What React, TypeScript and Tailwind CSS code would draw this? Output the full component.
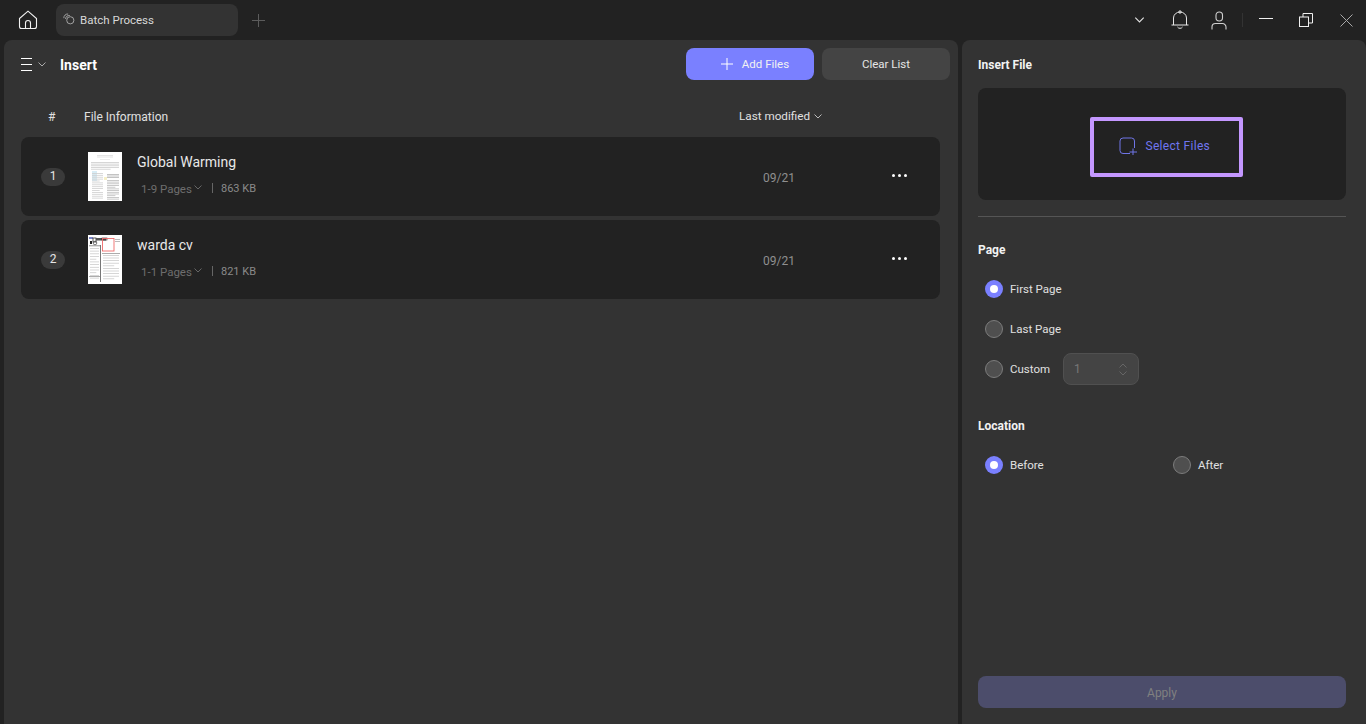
import React from "react";

const Chevron = ({ className = "", color = "#bdbdbd" }: { className?: string; color?: string }) => (
  <svg width="8" height="5" viewBox="0 0 8 5" fill="none" className={className}>
    <path d="M0.5 0.5 L4 4 L7.5 0.5" stroke={color} strokeWidth="1" />
  </svg>
);

const Lines = ({ n, x, y, w, gap, c = "#9a9a9a" }: { n: number; x: number; y: number; w: number; gap: number; c?: string }) => (
  <g>
    {Array.from({ length: n }).map((_, i) => (
      <rect key={i} x={x} y={y + i * gap} width={w - (i % 5 === 4 ? w * 0.3 : 0)} height="0.8" fill={c} />
    ))}
  </g>
);

const ThumbOne = () => (
  <svg width="34" height="49" viewBox="0 0 34 49" className="shrink-0">
    <rect width="34" height="49" fill="#fff" />
    <Lines n={2} x={9} y={3} w={16} gap={1.6} c="#ddd" />
    <Lines n={1} x={12} y={7} w={10} gap={1.5} c="#e6e6e6" />
    <Lines n={5} x={3} y={10} w={28} gap={1.7} c="#ccc" />
    <rect x="4" y="19" width="5" height="10" fill="#d8ecf5" />
    <rect x="16" y="25" width="3" height="3" fill="#f6f0c8" />
    <Lines n={14} x={4} y={21} w={11} gap={1.9} c="#cfcfcf" />
    <Lines n={3} x={19} y={22} w={12} gap={1.6} c="#b5b5b5" />
    <Lines n={12} x={19} y={28} w={12} gap={1.7} c="#bcbcbc" />
  </svg>
);

const ThumbTwo = () => (
  <svg width="34" height="49" viewBox="0 0 34 49" className="shrink-0">
    <rect width="34" height="49" fill="#fff" />
    <rect x="1" y="2" width="4" height="2" fill="#7d86c9" />
    <rect x="5" y="3" width="3" height="4" fill="none" stroke="#333" strokeWidth="0.8" />
    <rect x="8" y="3" width="10" height="2.5" fill="#555" />
    <rect x="14" y="3" width="5" height="2" fill="none" stroke="#222" strokeWidth="0.6" />
    <rect x="2" y="6" width="2" height="3" fill="#222" />
    <circle cx="7" cy="8" r="1.8" fill="none" stroke="#444" strokeWidth="0.7" />
    <rect x="14.5" y="3.5" width="11.5" height="12.5" fill="none" stroke="#ef6a6a" strokeWidth="0.9" />
    <Lines n={2} x={27} y={4} w={5} gap={2} c="#aaa" />
    <rect x="1" y="10.5" width="12" height="0.7" fill="#666" />
    <rect x="12" y="10" width="1" height="37" fill="#777" />
    <rect x="14" y="18" width="18" height="0.7" fill="#888" />
    <Lines n={12} x={2} y={13} w={9} gap={2.7} c="#ccc" />
    <Lines n={10} x={15} y={20} w={16} gap={2.6} c="#ccc" />
    <rect x="1" y="41" width="11" height="0.7" fill="#888" />
  </svg>
);

const Radio = ({ on }: { on?: boolean }) =>
  on ? (
    <span className="flex h-[18px] w-[18px] shrink-0 items-center justify-center rounded-full bg-[#7a80ff]">
      <span className="h-2 w-2 rounded-full bg-white" />
    </span>
  ) : (
    <span className="h-[18px] w-[18px] shrink-0 rounded-full border border-[#7c7c7c] bg-[#4f4f4f]" />
  );

const FileRow = ({ n, name, pages, size, thumb }: { n: number; name: string; pages: string; size: string; thumb: React.ReactNode }) => (
  <div className="flex h-[79px] items-center rounded-lg bg-[#222222]">
    <span className="ml-5 flex h-[18px] w-6 items-center justify-center rounded-full bg-[#3a3a3a] pb-px text-xs text-[#e6e6e6]">{n}</span>
    <div className="ml-[23px]">{thumb}</div>
    <div className="mb-1 ml-[15px] flex w-[626px] flex-col">
      <span className="text-sm leading-[18px] text-[#e8e8e8]">{name}</span>
      <div className="mt-2.5 flex items-center pl-[4px] text-[11.5px] leading-4 text-[#6e6e6e]">
        <span className="w-[51px] whitespace-nowrap">{pages}</span>
        <Chevron className="mb-[2px] ml-[2px]" color="#666" />
        <span className="mb-[2px] ml-2.5 h-2.5 w-px bg-[#666]" />
        <span className="ml-2 text-[11px] text-[#8a8a8a]">{size}</span>
      </div>
    </div>
    <span className="mt-0.5 w-[30px] text-xs text-[#8f8f8f]">09/21</span>
    <div className="mb-[3px] ml-[99px] flex gap-[3px]">
      <span className="h-[3px] w-[3px] rounded-full bg-white" />
      <span className="h-[3px] w-[3px] rounded-full bg-white" />
      <span className="h-[3px] w-[3px] rounded-full bg-white" />
    </div>
  </div>
);

export default function App() {
  return (
    <div className="flex h-[724px] w-[1366px] flex-col overflow-hidden bg-[#222222] font-['Roboto','Noto_Sans',sans-serif] text-xs text-[#e6e6e6]">
      {/* Title bar */}
      <header className="flex h-10 shrink-0 items-center">
        <svg width="20" height="20" viewBox="0 0 20 20" fill="none" className="ml-[18px]" stroke="#f2f2f2" strokeWidth="1.1">
          <path d="M1.5 8.5 L10 1.2 L18.5 8.5 V16.5 A2 2 0 0 1 16.5 18.5 H3.5 A2 2 0 0 1 1.5 16.5 Z" />
          <path d="M7.5 18.5 V13 A2.5 2.5 0 0 1 12.5 13 V18.5" />
        </svg>
        <div className="mb-[1px] ml-[18px] flex h-8 w-[182px] items-center rounded-lg bg-[#333333] pl-[7px]">
          <svg width="12" height="12" viewBox="0 0 14 14" fill="none" stroke="#a8a8a8" strokeWidth="1.1" className="mb-[2px]">
            <path d="M1 6 A4.5 4.5 0 0 1 6 1.2" />
            <path d="M3 7 A4.5 4.5 0 0 1 8 3" />
            <circle cx="8.5" cy="8.5" r="4.2" />
          </svg>
          <span className="ml-[5px] pt-0.5 text-[11.5px] text-[#d8d8d8]">Batch Process</span>
        </div>
        <svg width="13" height="13" viewBox="0 0 13 13" className="ml-[14px]" stroke="#5c5c5c" strokeWidth="1">
          <path d="M6.5 0 V13 M0 6.5 H13" />
        </svg>
        <div className="ml-auto flex items-center">
          <Chevron color="#e0e0e0" className="h-[6px] w-[11px]" />
          <svg width="18" height="20" viewBox="0 0 18 20" fill="none" stroke="#e6e6e6" strokeWidth="1" className="ml-[26px]">
            <path d="M0.5 15 H17.5" />
            <path d="M2.5 15 V8 A6.5 6 0 0 1 15.5 8 V15" />
            <circle cx="9" cy="2" r="1.2" />
            <path d="M6.5 17 A3 3 0 0 0 11.5 17" />
          </svg>
          <svg width="16" height="19" viewBox="0 0 16 19" fill="none" stroke="#d0d0d0" strokeWidth="1.1" className="ml-[22px]">
            <rect x="5" y="1" width="6.5" height="9" rx="3.2" />
            <path d="M1 18.5 V16 A3.5 3.5 0 0 1 4.5 12.5 H11.5 A3.5 3.5 0 0 1 15 16 V18.5" />
          </svg>
          <span className="ml-[15px] h-3.5 w-px bg-[#333]" />
          <span className="mb-[3px] ml-4 h-px w-3.5 bg-[#f0f0f0]" />
          <svg width="14" height="14" viewBox="0 0 14 14" fill="none" stroke="#f0f0f0" strokeWidth="1" className="ml-[26px]">
            <rect x="0.5" y="4" width="9" height="9.5" />
            <path d="M4 4 V0.5 H13.5 V10 H9.5" />
          </svg>
          <svg width="13" height="13" viewBox="0 0 13 13" stroke="#a8a8a8" strokeWidth="1" className="ml-[27px] mr-[13px]">
            <path d="M0.5 0.5 L12.5 12.5 M12.5 0.5 L0.5 12.5" />
          </svg>
        </div>
      </header>

      <div className="flex min-h-0 flex-1 gap-1 pl-1">
        {/* Left panel */}
        <main className="flex w-[954px] flex-col rounded-t-lg bg-[#333333]">
          <div className="mt-2 flex h-8 items-center pl-[17px]">
            <div className="flex flex-col gap-[5px]">
              <span className="h-px w-[11px] bg-white" />
              <span className="h-px w-[11px] bg-white" />
              <span className="h-px w-[11px] bg-white" />
            </div>
            <Chevron className="ml-[6px]" color="#aaa" />
            <span className="ml-[14px] pt-0.5 text-sm font-bold text-white">Insert</span>
            <button className="ml-auto flex h-8 w-32 items-center justify-center rounded-lg bg-[#7a80ff] pl-[10px] text-[11.5px] text-[#f2f2f2]">
              <svg width="12" height="12" viewBox="0 0 12 12" stroke="#fff" strokeWidth="1" className="mr-[9px]">
                <path d="M6 0 V12 M0 6 H12" />
              </svg>
              <span className="pt-0.5">Add Files</span>
            </button>
            <button className="ml-2 mr-2 flex h-8 w-32 items-center justify-center rounded-lg bg-[#444444] pt-0.5 text-[11.5px] text-[#e6e6e6]">Clear List</button>
          </div>
          <div className="mt-7 flex h-[17px] items-center pl-11 text-xs text-[#e0e0e0]">
            <span className="w-9">#</span>
            <span className="w-[83px] whitespace-nowrap">File Information</span>
            <span className="ml-[572px] w-[75px] text-[11.7px]">Last modified</span>
            <Chevron color="#bbb" />
          </div>
          <div className="mt-3 flex flex-col gap-1 pl-[17px] pr-[18px]">
            <FileRow n={1} name="Global Warming" pages="1-9 Pages" size="863 KB" thumb={<ThumbOne />} />
            <FileRow n={2} name="warda cv" pages="1-1 Pages" size="821 KB" thumb={<ThumbTwo />} />
          </div>
        </main>

        {/* Right panel */}
        <aside className="flex flex-1 flex-col rounded-t-lg bg-[#333333] pl-4 pr-5">
          <h2 className="mt-[17px] text-xs font-bold leading-4 text-[#f2f2f2]">Insert File</h2>
          <div className="mt-[15px] flex h-28 items-center justify-center rounded-lg bg-[#222222]">
            <div className="ml-[9px] mt-[6px] flex h-[60px] w-[153px] items-center justify-center gap-[9px] rounded-[2px] border-4 border-[#c497ff] pb-[2px] pr-1">
              <svg width="18" height="18" viewBox="0 0 18 18" fill="none" stroke="#6f75e6" strokeWidth="1">
                <path d="M11 16.5 H4 A3 3 0 0 1 1 13.5 V4 A3 3 0 0 1 4 1 H12.5 A3 3 0 0 1 15.5 4 V11" />
                <path d="M14 11.5 V18 M10.5 15 H18" />
              </svg>
              <span className="w-[65px] whitespace-nowrap text-xs tracking-[0.3px] text-[#7076f0]">Select Files</span>
            </div>
          </div>
          <div className="mt-4 h-px bg-[#555555]" />
          <h2 className="mt-[25px] text-xs font-bold leading-4 text-[#f2f2f2]">Page</h2>
          <div className="mt-[22px] flex h-[18px] items-center gap-[7px] pl-[7px]">
            <Radio on />
            <span className="pt-0.5 text-[11.5px] text-[#e0e0e0]">First Page</span>
          </div>
          <div className="mt-[22px] flex h-[18px] items-center gap-[7px] pl-[7px]">
            <Radio />
            <span className="pt-0.5 text-[11.5px] text-[#e0e0e0]">Last Page</span>
          </div>
          <div className="mt-[22px] flex h-[18px] items-center gap-[7px] pl-[7px]">
            <Radio />
            <span className="w-[41px] pt-0.5 text-[11.5px] text-[#e0e0e0]">Custom</span>
            <div className="ml-[5px] flex h-8 w-[76px] shrink-0 items-center justify-between rounded-lg border border-[#505050] bg-[#444444] pl-[10px] pr-[11px]">
              <span className="text-xs text-[#777]">1</span>
              <div className="flex flex-col gap-[3px]">
                <Chevron className="rotate-180" color="#666" />
                <Chevron color="#666" />
              </div>
            </div>
          </div>
          <h2 className="mt-10 text-xs font-bold leading-4 text-[#f2f2f2]">Location</h2>
          <div className="mt-[22px] flex h-[18px] items-center pl-[7px]">
            <div className="flex w-[188px] items-center gap-[7px]">
              <Radio on />
              <span className="pt-0.5 text-[11.5px] text-[#e0e0e0]">Before</span>
            </div>
            <div className="flex items-center gap-[7px]">
              <Radio />
              <span className="pt-0.5 text-[11.5px] text-[#e0e0e0]">After</span>
            </div>
          </div>
          <button className="mb-4 mt-auto flex h-8 items-center justify-center rounded-lg bg-[#4c4d6b] pt-0.5 text-xs text-[#808080]">Apply</button>
        </aside>
      </div>
    </div>
  );
}
